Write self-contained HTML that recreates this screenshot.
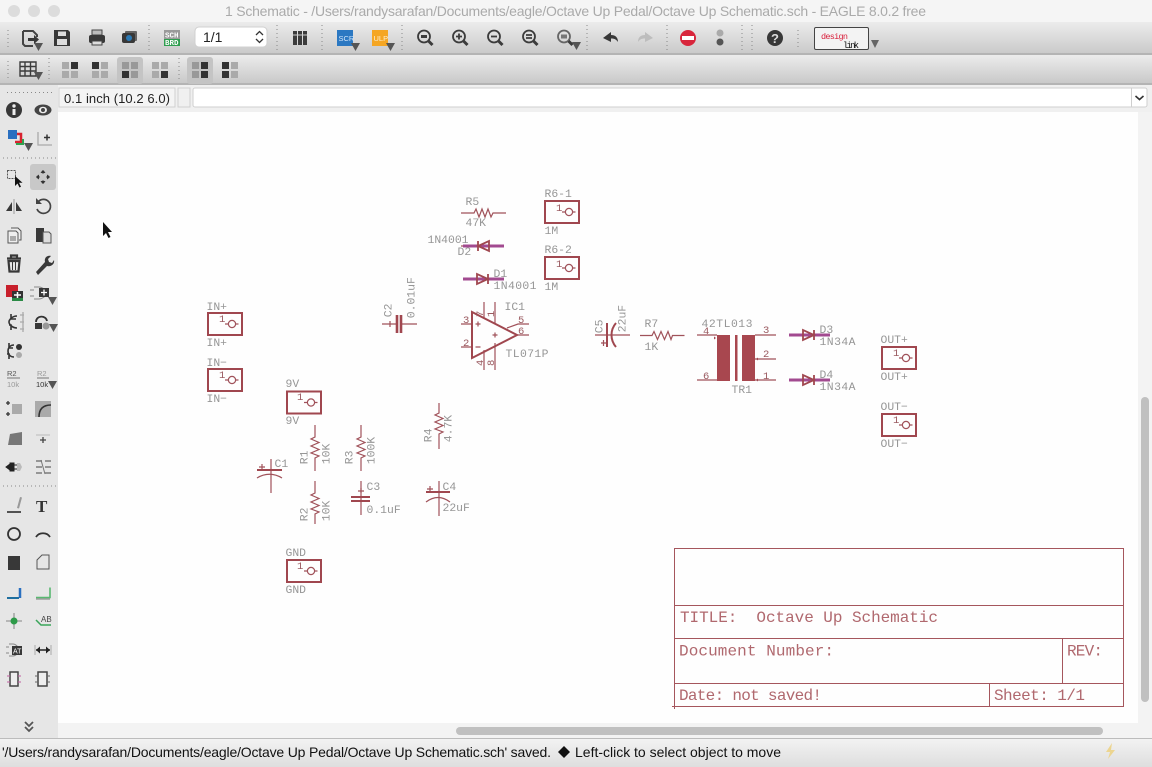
<!DOCTYPE html>
<html><head><meta charset="utf-8"><title>EAGLE Schematic</title>
<style>
html,body{margin:0;padding:0;background:#f0f0f0;overflow:hidden}
svg{display:block}
.l{font-family:"Liberation Mono",monospace;font-size:11.4px;fill:#969696}
.p{font-family:"Liberation Mono",monospace;font-size:10.5px;fill:#9a5a60}
.t{font-family:"Liberation Mono",monospace;font-size:16px;fill:#b0686e}
.u{font-family:"Liberation Sans",sans-serif}
.n{fill:none;stroke:#a0525a;stroke-width:1.2}
.b{fill:none;stroke:#a0474f;stroke-width:2}
.m{fill:none;stroke:#a24a90;stroke-width:3}
.ic{fill:#383838}
.gr{fill:none;stroke:#888;stroke-width:1;stroke-dasharray:1 3}
</style></head><body>
<svg width="1152" height="767" viewBox="0 0 1152 767" xmlns="http://www.w3.org/2000/svg">
<defs>
<linearGradient id="tb" x1="0" y1="0" x2="0" y2="1"><stop offset="0" stop-color="#ececec"/><stop offset="1" stop-color="#c9c9c9"/></linearGradient>
<linearGradient id="st" x1="0" y1="0" x2="0" y2="1"><stop offset="0" stop-color="#f3f3f3"/><stop offset="1" stop-color="#dedede"/></linearGradient>
<g id="conn"><rect x="0" y="0" width="34" height="22" class="b"/><circle cx="24" cy="11" r="3.6" class="n"/><path d="M17 11h3.5M27.5 11h3" class="n"/></g>
<path id="arr" d="M0 0h9l-4.5 8z" fill="#555"/>
</defs>
<!-- chrome -->
<rect width="1152" height="767" fill="#e8e8e8"/>
<rect width="1152" height="22" fill="#f5f5f5"/>
<rect y="22" width="1152" height="32" fill="url(#tb)"/>
<rect y="53" width="1152" height="2" fill="#b4b4b4"/>
<rect y="55" width="1152" height="28" fill="url(#tb)"/>
<rect y="83" width="1152" height="2" fill="#b4b4b4"/>
<rect y="85" width="1152" height="27" fill="#f0f0f0"/>
<rect x="0" y="85" width="58" height="653" fill="#e6e6e6"/>
<rect x="58" y="112" width="1080" height="611" fill="#fefefe"/>
<rect x="1138" y="112" width="14" height="626" fill="#f3f3f3"/>
<rect x="58" y="723" width="1094" height="15" fill="#f3f3f3"/>
<rect x="1141" y="397" width="8" height="305" rx="4" fill="#c0c0c0"/>
<rect x="456" y="727" width="647" height="8" rx="4" fill="#c0c0c0"/>
<rect y="738" width="1152" height="29" fill="url(#st)"/>
<rect y="738" width="1152" height="1" fill="#bcbcbc"/>
<!-- traffic lights + title -->
<circle cx="14" cy="11" r="6" fill="#dcdcdc"/><circle cx="34" cy="11" r="6" fill="#dcdcdc"/><circle cx="54" cy="11" r="6" fill="#dcdcdc"/>
<text class="u" x="225" y="16" font-size="14" fill="#aaaaaa" textLength="701">1 Schematic - /Users/randysarafan/Documents/eagle/Octave Up Pedal/Octave Up Schematic.sch - EAGLE 8.0.2 free</text>
<!-- toolbar 1 separators -->
<path class="gr" d="M8 30V48M149 25V52M277 25V52M322 25V52M402 25V52M587 25V52M667 25V52M742 25V52M752 25V52M798 30V48M8 61V80M49 58V80M179 58V80M7 92.5H52M3 158H58M3 486H58"/>
<!-- open -->
<path d="M23 31h10l4 4v2M23 31v13l2 2h8" fill="none" stroke="#444" stroke-width="2"/><path d="M28 38h6v-3l5 4.500-5 4.500v-3h-6z" class="ic"/><use href="#arr" x="34" y="43"/>
<!-- save -->
<path d="M54 30h14l2 2v14H54z" class="ic"/><rect x="58" y="31.500" width="8" height="4.500" fill="#ddd"/><rect x="57" y="39" width="10" height="6" fill="#ddd"/>
<!-- print -->
<path d="M92 30h10v5h-10z" fill="#bbb" stroke="#444"/><rect x="89" y="35" width="16" height="8" rx="2" class="ic"/><rect x="92" y="41" width="10" height="4" fill="#ddd" stroke="#444"/>
<!-- cam -->
<rect x="125" y="31" width="12" height="10" rx="1" fill="#666"/><rect x="122" y="33" width="13" height="10" rx="2" class="ic"/><circle cx="129" cy="38" r="3" fill="#2a79b5"/>
<!-- sch/brd -->
<rect x="164" y="30" width="16" height="9" fill="#9a9a9a"/><rect x="164" y="39" width="16" height="7" fill="#2f9e4f"/>
<text x="165" y="37.500" font-family="Liberation Mono" font-size="7.500" font-weight="bold" fill="#fff">SCH</text><text x="165" y="45" font-family="Liberation Mono" font-size="7.500" font-weight="bold" fill="#fff">BRD</text>
<!-- combo -->
<rect x="195" y="27" width="72" height="20" rx="4" fill="#fff" stroke="#d0d0d0"/>
<text class="u" x="203" y="42" font-size="14" fill="#222">1/1</text>
<path d="M256 35l3.500-3.500 3.500 3.500M256 39l3.500 3.500 3.500-3.500" fill="none" stroke="#333" stroke-width="1.300"/>
<!-- books -->
<path d="M293 31h4v14h-4zM298 31h4v14h-4zM303 31h4v14h-4z" fill="#3c3c3c"/><path d="M293 35h14" stroke="#ccc"/>
<!-- SCR ULP -->
<rect x="337" y="30" width="16" height="16" fill="#2b78c2"/><text x="338.500" y="41" font-family="Liberation Sans" font-size="7.500" fill="#cfe4fa">SCR</text><use href="#arr" x="351" y="43"/>
<rect x="372" y="30" width="16" height="16" fill="#f5a623"/><text x="373.500" y="41" font-family="Liberation Sans" font-size="7.500" fill="#fff0d0">ULP</text><use href="#arr" x="386" y="43"/>
<!-- zooms -->
<g fill="none" stroke="#3c3c3c" stroke-width="1.800">
<circle cx="424" cy="36.500" r="6"/><path d="M428.500 41l4 4" stroke-width="3"/><path d="M421 36.500h6" stroke-width="3"/>
<circle cx="459" cy="36.500" r="6"/><path d="M463.500 41l4 4" stroke-width="3"/><path d="M456 36.500h6M459 33.500v6"/>
<circle cx="494" cy="36.500" r="6"/><path d="M498.500 41l4 4" stroke-width="3"/><path d="M491 36.500h6"/>
<circle cx="529" cy="36.500" r="6"/><path d="M533.500 41l4 4" stroke-width="3"/><path d="M526 35h6M526 38h6"/>
<circle cx="564" cy="36.500" r="6" stroke="#666"/><path d="M568.500 41l4 4" stroke-width="3"/><rect x="561" y="34.500" width="6" height="4" fill="#777" stroke="none"/>
</g><use href="#arr" x="572" y="42"/>
<!-- undo/redo -->
<path d="M603 38l8-6v3c4 0 7 2 7 7-2-3-4-3.500-7-3.500V42z" class="ic"/>
<path d="M653 38l-8-6v3c-4 0-7 2-7 7 2-3 4-3.500 7-3.500V42z" fill="#bdbdbd"/>
<!-- stop -->
<circle cx="688" cy="38" r="8" fill="#d8263c"/><rect x="682" y="36" width="12" height="4" fill="#fff"/>
<circle cx="720" cy="33" r="3.500" fill="#aaa"/><circle cx="720" cy="42" r="3.500" fill="#555"/>
<!-- help -->
<circle cx="775" cy="38" r="8" class="ic"/><text class="u" x="771" y="43" font-size="13" font-weight="bold" fill="#ddd">?</text>
<!-- design link -->
<rect x="814.500" y="27.500" width="54" height="22" rx="1.500" fill="#f3f3f3" stroke="#444"/>
<text x="821" y="39" font-family="Liberation Mono" font-size="8.500" fill="#d8203c" textLength="27">design</text><text x="843" y="48" font-family="Liberation Mono" font-size="9" fill="#111" textLength="16">link</text>
<path d="M871 40h8l-4 8z" fill="#666"/>
<!-- toolbar 2 -->
<path d="M20 62h16v14H20z M20 66.500h16M20 71h16M25 62v14M30.500 62v14" fill="none" stroke="#3c3c3c" stroke-width="1.400"/><use href="#arr" x="34" y="72"/>
<rect x="117" y="57" width="26" height="27" rx="3" fill="#c4c4c4"/><rect x="187" y="57" width="26" height="27" rx="3" fill="#c4c4c4"/>
<g fill="#aaa"><rect x="62" y="62" width="7" height="7"/><rect x="71" y="62" width="7" height="7" fill="#333"/><rect x="62" y="71" width="7" height="7"/><rect x="71" y="71" width="7" height="7"/>
<rect x="92" y="62" width="7" height="7" fill="#333"/><rect x="101" y="62" width="7" height="7"/><rect x="92" y="71" width="7" height="7"/><rect x="101" y="71" width="7" height="7"/>
<rect x="122" y="62" width="7" height="7" fill="#999"/><rect x="131" y="62" width="7" height="7" fill="#999"/><rect x="122" y="71" width="7" height="7" fill="#333"/><rect x="131" y="71" width="7" height="7" fill="#999"/>
<rect x="152" y="62" width="7" height="7"/><rect x="161" y="62" width="7" height="7"/><rect x="152" y="71" width="7" height="7"/><rect x="161" y="71" width="7" height="7" fill="#333"/>
<rect x="192" y="62" width="7" height="7" fill="#999"/><rect x="201" y="62" width="7" height="7" fill="#333"/><rect x="192" y="71" width="7" height="7" fill="#999"/><rect x="201" y="71" width="7" height="7" fill="#333"/>
<rect x="222" y="62" width="7" height="7" fill="#333"/><rect x="231" y="62" width="7" height="7"/><rect x="222" y="71" width="7" height="7" fill="#333"/><rect x="231" y="71" width="7" height="7"/></g>
<!-- command row -->
<rect x="59" y="88" width="116" height="19" fill="#f4f4f4" stroke="#cfcfcf"/>
<text class="u" x="64" y="103" font-size="13" fill="#222" textLength="106">0.1 inch (10.2 6.0)</text>
<rect x="178" y="88" width="12" height="19" fill="#f0f0f0" stroke="#cfcfcf"/>
<rect x="193" y="88" width="954" height="19" rx="2" fill="#fff" stroke="#cfcfcf"/>
<path d="M1131.500 88v19" stroke="#cfcfcf"/>
<path d="M1135.500 96l4 3.500 4-3.500" fill="none" stroke="#333" stroke-width="1.600"/>
<!-- LEFT PANEL ICONS -->
<circle cx="14" cy="110" r="8" class="ic"/><rect x="12.500" y="109" width="3" height="6" fill="#eee"/><circle cx="14" cy="106" r="1.700" fill="#eee"/>
<ellipse cx="43" cy="110" rx="8.500" ry="5.500" fill="#444"/><ellipse cx="43" cy="110" rx="4" ry="3.300" fill="#eee"/><circle cx="43" cy="110" r="2" fill="#444"/>
<rect x="8" y="130" width="9" height="9" fill="#2a6fc0"/><path d="M17 134h4v8h-6" fill="none" stroke="#d8232f" stroke-width="2.500"/><path d="M23 139v5h-7" fill="none" stroke="#2fa24f" stroke-width="2"/><use href="#arr" x="24" y="143"/>
<path d="M38 132v13H52M38 145H52" fill="none" stroke="#aaa" stroke-width="1.300"/><path d="M44 137.500h6M47 134.500v6" stroke="#333" stroke-width="1.500"/>
<rect x="7.500" y="170.500" width="8" height="8" fill="none" stroke="#555" stroke-dasharray="2 1"/><path d="M15 176v10l2.500-2.500 2 4 1.500-.8-2-4h3.500z" fill="#111"/>
<rect x="30" y="164" width="26" height="26" rx="3" fill="#c8c8c8"/><path d="M43 170l-2.500 3h5zM43 184l-2.500-3h5zM36 177l3-2.500v5zM50 177l-3-2.500v5z" fill="#333"/><circle cx="38" cy="177" r="1.500" fill="#333"/><circle cx="48" cy="177" r="1.500" fill="#333"/><circle cx="43" cy="172" r="1.500" fill="#333"/><circle cx="43" cy="182" r="1.500" fill="#333"/>
<path d="M6 211l6-9v9zM22 211l-6-9v9z" class="ic"/><path d="M14 199v15" stroke="#999"/>
<path d="M38 202a7 7 0 1 1-1 7" fill="none" stroke="#444" stroke-width="1.700"/><path d="M36 198v6h6z" fill="#444"/>
<path d="M11 228h7l3 3v9h-2M8 231h8l2 2v10H8z" fill="#eee" stroke="#555"/><rect x="10" y="236" width="6" height="5" fill="#aaa"/>
<path d="M36 228h8v14h-8z" class="ic"/><path d="M43 232h6l2 2v9h-8z" fill="#ddd" stroke="#555"/>
<path d="M7 258.500h14M11 258v-2.500h6v2.500M8.500 261h11l-1 10.500h-9z" fill="none" stroke="#383838" stroke-width="2.200"/><path d="M12.500 262v8M15.500 262v8" stroke="#383838"/>
<path d="M36 272l9-10c-1-4 2-7 6-6l-3 3 1 3 3 1 2-3c1 4-3 7-7 6l-9 9z" class="ic"/>
<rect x="6" y="285" width="12" height="12" fill="#c8202c"/><rect x="12" y="291" width="11" height="10" fill="#333"/><rect x="12" y="298" width="11" height="3" fill="#2a8a45"/><path d="M14 295h7M17.500 292v6" stroke="#fff" stroke-width="1.500"/>
<path d="M34 287h5c3 0 7 3 9 6-2 3-6 6-9 6h-5" fill="none" stroke="#888"/><path d="M30 290h4M30 296h4" stroke="#888"/><rect x="39" y="288" width="10" height="9" class="ic"/><path d="M41 292.500h6M44 289.500v6" stroke="#fff" stroke-width="1.300"/><use href="#arr" x="48" y="297"/>
<path d="M17 316c-5 0-8 4-8 6s3 6 8 6M11 314v5h5M11 330v-5h-2" fill="none" stroke="#333" stroke-width="1.600"/><path d="M20 315h4M20 322h4M20 329h4M23 312v20" stroke="#aaa" stroke-width="1.300"/>
<path d="M36 322c0-7 10-7 11-1" fill="none" stroke="#333" stroke-width="1.800"/><rect x="35" y="323" width="7" height="6" class="ic"/><circle cx="46" cy="326" r="3.500" fill="#999"/><use href="#arr" x="49" y="324"/>
<path d="M14 345c-4 0-6 3-6 6s2 6 6 6M9 343v5h4M9 359v-5h-2" fill="none" stroke="#333" stroke-width="1.600"/><circle cx="19" cy="347" r="3" fill="#333"/><circle cx="19" cy="355" r="3" fill="#aaa"/>
<text x="7" y="376" font-family="Liberation Sans" font-size="7.500" fill="#555">R2</text><path d="M7 378h13" stroke="#777"/><text x="7" y="387" font-family="Liberation Sans" font-size="7.500" fill="#999">10k</text>
<text x="37" y="376" font-family="Liberation Sans" font-size="7.500" fill="#999">R2</text><path d="M37 378h12" stroke="#777"/><text x="36" y="387" font-family="Liberation Sans" font-size="7.500" fill="#333">10k</text><use href="#arr" x="48" y="381"/>
<path d="M6 403h4M8 401v4M6 414h4M8 412v4" stroke="#333" stroke-width="1.300"/><rect x="12" y="404" width="10" height="10" fill="#aaa"/>
<rect x="35" y="401" width="16" height="16" fill="#aaa"/><path d="M39 417c0-8 4-12 12-12" fill="none" stroke="#333" stroke-width="1.600"/>
<path d="M8 445l2-11 12-2v13z" fill="#777"/>
<path d="M36 435h14" stroke="#bbb"/><path d="M40 440h6M43 437v6" stroke="#444" stroke-width="1.300"/>
<path d="M6 467l4-3v-1h4v8h-4v-1zM14 465h3M14 469h3" fill="#222" stroke="#222"/><path d="M17 463h3l2 4-2 4h-3z" fill="#bbb"/>
<path d="M36 461h6M36 467h6M36 473h6M45 461h6M45 467h6M45 473h6" stroke="#666" stroke-width="1.300"/><path d="M41 460l4 14" stroke="#777"/>
<path d="M7 512h14" stroke="#222" stroke-width="1.500"/><path d="M17 508l3-11 2 .5-3 11z" fill="#999"/>
<text x="36" y="512" font-family="Liberation Serif" font-size="17" font-weight="bold" fill="#333">T</text>
<circle cx="14" cy="534" r="6" fill="none" stroke="#333" stroke-width="1.800"/>
<path d="M36 537c3-5 11-5 14 0" fill="none" stroke="#333" stroke-width="1.800"/>
<rect x="8" y="556" width="12" height="14" class="ic"/>
<path d="M37 569v-9l5-5h7v14z" fill="none" stroke="#555"/>
<path d="M7 597.500h13v-9" fill="none" stroke="#222" stroke-width="1"/><path d="M7 598h12" stroke="#1f6f9f" stroke-width="2"/><path d="M20 588v10" stroke="#2a70c0" stroke-width="2.500"/>
<path d="M36 597.500h14v-10" fill="none" stroke="#58b870" stroke-width="1.600"/><path d="M36 599h14" stroke="#333" stroke-width=".6"/>
<path d="M6 621h16M14 613v16" stroke="#999" stroke-width="1.300"/><circle cx="14" cy="621" r="3.500" fill="#2c9a48"/>
<path d="M36 620l5 5h10" fill="none" stroke="#3aa55a" stroke-width="1.500"/><text x="41" y="622" font-family="Liberation Sans" font-size="8" fill="#444">AB</text>
<path d="M9 644h4c3 0 5 3 7 6-2 3-4 6-7 6H9M6 647h3M6 653h3" fill="none" stroke="#888"/><rect x="12" y="646" width="10" height="9" class="ic"/><text x="13" y="653.500" font-family="Liberation Sans" font-size="7" fill="#fff">AT</text>
<path d="M36 650h14" stroke="#222" stroke-width="1.500"/><path d="M36 650l4-3.500v7zM50 650l-4-3.500v7z" fill="#222"/><path d="M35 645v10M51 645v10" stroke="#aaa"/>
<rect x="10" y="672" width="8" height="14" fill="#eee" stroke="#444" stroke-width="1.500"/><path d="M7 676h3M7 682h3M18 676h3M18 682h3" stroke="#c060a0"/>
<rect x="38" y="672" width="9" height="14" fill="#eee" stroke="#444" stroke-width="1.500"/><path d="M35 676h3M35 682h3M47 676h3M47 682h3" stroke="#666"/>
<path d="M25 722l4 4 4-4M25 727l4 4 4-4" fill="none" stroke="#555" stroke-width="1.800"/>
<!-- status -->
<text class="u" x="2" y="757" font-size="14" fill="#111" textLength="549">'/Users/randysarafan/Documents/eagle/Octave Up Pedal/Octave Up Schematic.sch' saved.</text>
<path d="M564 746l6 6-6 6-6-6z" fill="#111"/>
<text class="u" x="575" y="757" font-size="14" fill="#111" textLength="206">Left-click to select object to move</text>
<path d="M1112 743l-6 9h4l-2 7 7-9h-4z" fill="#ecd590"/>
<!-- cursor -->
<path d="M103 222v14l3-3 2.500 5 2-1-2.500-5h4z" fill="#111"/>
<!-- CONNECTORS -->
<use href="#conn" x="208" y="313"/><use href="#conn" x="208" y="369"/><use href="#conn" x="287" y="391.500"/><use href="#conn" x="287" y="560"/>
<use href="#conn" x="545" y="201"/><use href="#conn" x="545" y="257"/><use href="#conn" x="882" y="347"/><use href="#conn" x="882" y="414"/>
<g class="p"><text x="219" y="322">1</text><text x="219" y="378">1</text><text x="297" y="400">1</text><text x="297" y="569">1</text><text x="556" y="211">1</text><text x="556" y="267">1</text><text x="893" y="356">1</text><text x="893" y="423">1</text></g>
<g class="l" transform="translate(-0.5 -0.8)">
<text x="207" y="311">IN+</text><text x="207" y="347">IN+</text><text x="207" y="367">IN−</text><text x="207" y="403">IN−</text>
<text x="286" y="388">9V</text><text x="286" y="425">9V</text><text x="286" y="557">GND</text><text x="286" y="594">GND</text>
<text x="545" y="198">R6-1</text><text x="545" y="235">1M</text><text x="545" y="254">R6-2</text><text x="545" y="291">1M</text>
<text x="881" y="344">OUT+</text><text x="881" y="381">OUT+</text><text x="881" y="411">OUT−</text><text x="881" y="448">OUT−</text>
<text x="466" y="206">R5</text><text x="466" y="227">47K</text>
<text x="428" y="244">1N4001</text><text x="458" y="256">D2</text>
<text x="494" y="278">D1</text><text x="494" y="290" textLength="43">1N4001</text>
<text x="505" y="311">IC1</text><text x="506" y="358" textLength="43">TL071P</text>
<text x="645" y="328">R7</text><text x="645" y="351">1K</text>
<text x="702" y="328" textLength="51">42TL013</text><text x="732" y="394">TR1</text>
<text x="820" y="334">D3</text><text x="820" y="346" textLength="36">1N34A</text>
<text x="820" y="379">D4</text><text x="820" y="391" textLength="36">1N34A</text>
<text x="275" y="468">C1</text><text x="367" y="491">C3</text><text x="367" y="514">0.1uF</text><text x="443" y="491">C4</text><text x="443" y="512">22uF</text>
<text transform="translate(392 318) rotate(-90)">C2</text><text transform="translate(415 319) rotate(-90)">0.01uF</text>
<text transform="translate(603 334) rotate(-90)">C5</text><text transform="translate(626 333) rotate(-90)">22uF</text>
<text transform="translate(308 465) rotate(-90)">R1</text><text transform="translate(330 465) rotate(-90)">10K</text>
<text transform="translate(353 465) rotate(-90)">R3</text><text transform="translate(375 465) rotate(-90)">100K</text>
<text transform="translate(308 522) rotate(-90)">R2</text><text transform="translate(330 522) rotate(-90)">10K</text>
<text transform="translate(432 443) rotate(-90)">R4</text><text transform="translate(452 443) rotate(-90)">4.7K</text>
</g>
<!-- resistors -->
<g class="n">
<path d="M461 213h13l2-4 3 8 3-8 3 8 3-8 3 8 2-4h13"/>
<path d="M640 335.500h12l2-4 3.500 8 3.500-8 3.500 8 3.500-8 3 8 1.500-4h12"/>
<path d="M315 425v12l-4 2 8 3.500-8 3.500 8 3.500-8 3.500 8 3-4 2v13"/>
<path d="M361 425v12l-4 2 8 3.500-8 3.500 8 3.500-8 3.500 8 3-4 2v13"/>
<path d="M315 481v12l-4 2 8 3.500-8 3.500 8 3.500-8 3.500 8 3-4 2v10"/>
<path d="M439 403v10l-4 2 8 3.500-8 3.500 8 3.500-8 3.500 8 3-4 2v15"/>
<!-- IC pins -->
<path d="M461 324h11M461 347h11M517 335h12M507 328l11-4h11M484 302v16M495 302v22M484 350v20M495 343v27"/>
<path d="M475.500 324h5M478 321.500v5M475.500 347h5M492.500 335h5M495 332.500v5"/>
<!-- caps -->
<path d="M382 324h15M401 324h16M595 335h35M271 459v34M361 481v34M439 481v35M390 321v6"/>
<path d="M257 478c8-5 17-5 25 0M426 502c8-6 16-6 24 0"/>
<path d="M259 467h6M262 464v6M427 489h6M430 486v6M601 343h5M603.500 340v6M358 491h6M361 488v5"/>
<!-- transformer wires -->
<path d="M697 335h20M697 380h20M755 335h21M755 359h21M755 380h21"/>
<path d="M461 246h43M463 279h41"/>
<path d="M789 335h41M789 380h41"/>
</g>
<!-- heavier -->
<g class="b">
<path d="M472 312v46l45-23z"/>
<path d="M607 323v24" stroke-width="2"/><path d="M616 323c-6 7-6 17 0 24"/>
<path d="M397 315v18M401 315v18" stroke-width="2.600"/>
<path d="M257 470h25M426 492h24M351 497h19M351 501h19"/>
</g>
<!-- transformer -->
<rect x="717" y="335" width="13" height="46" fill="#a8474f"/><rect x="742" y="335" width="13" height="46" fill="#a8474f"/><rect x="735" y="335" width="2.500" height="46" fill="#a8474f"/>
<g class="p"><text x="703" y="334">4</text><text x="703" y="379">6</text><text x="763" y="333">3</text><text x="763" y="357">2</text><text x="763" y="379">1</text>
<text x="463" y="323">3</text><text x="463" y="346">2</text><text x="518" y="323">5</text><text x="518" y="334">6</text>
<text transform="translate(483 317) rotate(-90)">7</text><text transform="translate(494 317) rotate(-90)">1</text><text transform="translate(483 366) rotate(-90)">4</text><text transform="translate(494 366) rotate(-90)">8</text></g>
<path d="M716 338l-2-1.500v3zM756 359l2-1.500v3zM756 380l2-1.500v3z" fill="#a0474f"/>
<!-- diodes -->
<path class="m" d="M463 246h41M463 279h41M789 335h41M789 380h41"/>
<g fill="none" stroke="#a0474f" stroke-width="1.800">
<path d="M489 241v10l-11-5zM478 241v10"/>
<path d="M477 274v10l11-5zM488 274v10"/>
<path d="M803 330v10l11-5zM814 330v10"/>
<path d="M803 375v10l11-5zM814 375v10"/>
</g>
<!-- frame -->
<g fill="none" stroke="#a5565d" stroke-width="1">
<path d="M674.500 548.500h449v158h-449zM674.500 605.500h449M674.500 638.500h449M674.500 683.500h449M1062.500 638.500v45M989.500 683.500v23M674.500 703v6M672 706.500h5"/>
</g>
<text class="t" x="680" y="622" textLength="258">TITLE:&#160; Octave Up Schematic</text>
<text class="t" x="679" y="655.500" textLength="155">Document Number:</text>
<text class="t" x="1067" y="655.500" textLength="36">REV:</text>
<text class="t" x="679" y="700" textLength="143">Date: not saved!</text>
<text class="t" x="994" y="700" textLength="91">Sheet: 1/1</text>
</svg>
</body></html>
